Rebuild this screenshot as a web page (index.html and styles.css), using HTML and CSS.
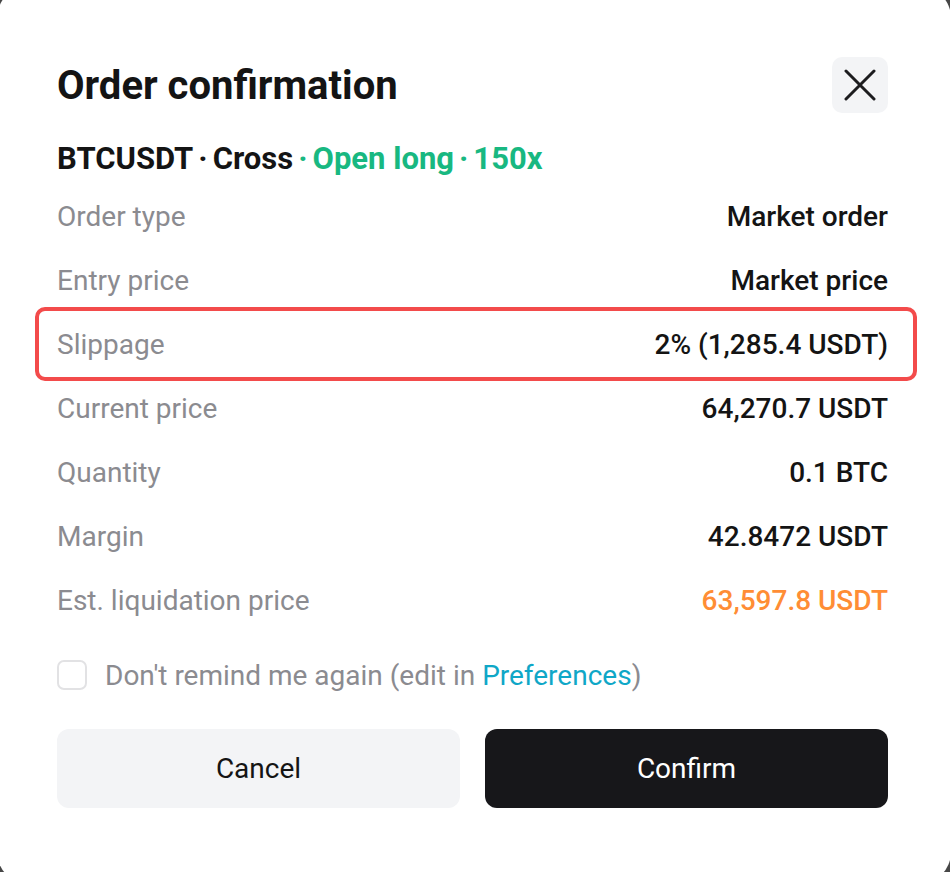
FILE: index.html
```html
<!DOCTYPE html>
<html lang="en">
<head>
  <meta charset="UTF-8" />
  <meta name="viewport" content="width=device-width, initial-scale=1.0"/>
  <title>Order confirmation</title>
  <link rel="stylesheet" href="styles.css">
</head>
<body>

  <div class="modal">
    <div class="modal-header">
      <h1>Order confirmation</h1>
      <button class="close" aria-label="Close">
        <svg width="32" height="32" viewBox="0 0 32 32">
          <path d="M2 2 L30 30 M30 2 L2 30" stroke="#1c1c1e" stroke-width="3" stroke-linecap="round" fill="none"/>
        </svg>
      </button>
    </div>

    <p class="pair">BTCUSDT<span class="dot">·</span>Cross<span class="long"><span class="dot">·</span>Open long<span class="dot">·</span>150x</span></p>

    <ul class="details">
      <li><span class="label">Order type</span><span class="value">Market order</span></li>
      <li><span class="label">Entry price</span><span class="value">Market price</span></li>
      <li class="highlight"><span class="label">Slippage</span><span class="value">2% (1,285.4 USDT)</span></li>
      <li><span class="label">Current price</span><span class="value">64,270.7 USDT</span></li>
      <li><span class="label">Quantity</span><span class="value">0.1 BTC</span></li>
      <li><span class="label">Margin</span><span class="value">42.8472 USDT</span></li>
      <li><span class="label">Est. liquidation price</span><span class="value warn">63,597.8 USDT</span></li>
    </ul>

    <label class="remind">
      <span class="box"></span>
      <span>Don't remind me again (edit in <a href="#">Preferences</a>)</span>
    </label>

    <div class="actions">
      <button class="button cancel">Cancel</button>
      <button class="button confirm">Confirm</button>
    </div>
  </div>

</body>
</html>
```

FILE: styles.css
```css
body {
  margin: 0;
  background-color: #474747;
  font-family: Roboto, "Liberation Sans", sans-serif;
  overflow: hidden;
}

.modal {
  box-sizing: border-box;
  width: 954px;
  height: 898px;
  margin: -14px 0 0 -3px;
  padding: 71px 63px 0 60px;
  background-color: #fff;
  border-radius: 32px;
}

.modal-header {
  display: flex;
  justify-content: space-between;
  align-items: center;
  height: 56px;
}

h1 {
  margin: 0;
  font-size: 40px;
  font-weight: 700;
  color: #141414;
}

.close {
  display: flex;
  align-items: center;
  justify-content: center;
  width: 56px;
  height: 56px;
  padding: 0;
  border: none;
  border-radius: 10px;
  background-color: #f3f4f6;
}

.pair {
  margin: 26px 0 0;
  line-height: 40px;
  font-size: 31px;
  font-weight: 700;
  color: #141414;
}

.pair .dot {
  margin: 0 5px;
}

.long {
  color: #18b881;
}

ul.details {
  list-style-type: none;
  margin: 5px 0 0;
  padding: 0;
}

.details li {
  display: flex;
  justify-content: space-between;
  align-items: center;
  height: 64px;
  font-size: 28px;
}

.details .highlight {
  position: relative;
}

.details .highlight::after {
  content: "";
  position: absolute;
  top: -5px;
  bottom: -5px;
  left: -22px;
  right: -29px;
  border: 4px solid #f34b4b;
  border-radius: 10px;
}

.label {
  color: #8b8b90;
}

.value {
  font-weight: 500;
  color: #141414;
}

.value.warn {
  color: #ff8d35;
}

.remind {
  display: flex;
  align-items: center;
  gap: 18px;
  height: 40px;
  margin-top: 23px;
  font-size: 28px;
  color: #8b8b90;
}

.remind .box {
  box-sizing: border-box;
  width: 30px;
  height: 30px;
  border: 2px solid #e2e2e4;
  border-radius: 7px;
}

.remind a {
  color: #0fa7c7;
  text-decoration: none;
}

.actions {
  display: grid;
  grid-template-columns: 1fr 1fr;
  gap: 25px;
  margin-top: 34px;
}

.button {
  height: 79px;
  border: none;
  border-radius: 12px;
  font-family: inherit;
  font-size: 28px;
}

.cancel {
  background-color: #f3f4f6;
  color: #141414;
}

.confirm {
  background-color: #17171a;
  color: #fff;
}
```
